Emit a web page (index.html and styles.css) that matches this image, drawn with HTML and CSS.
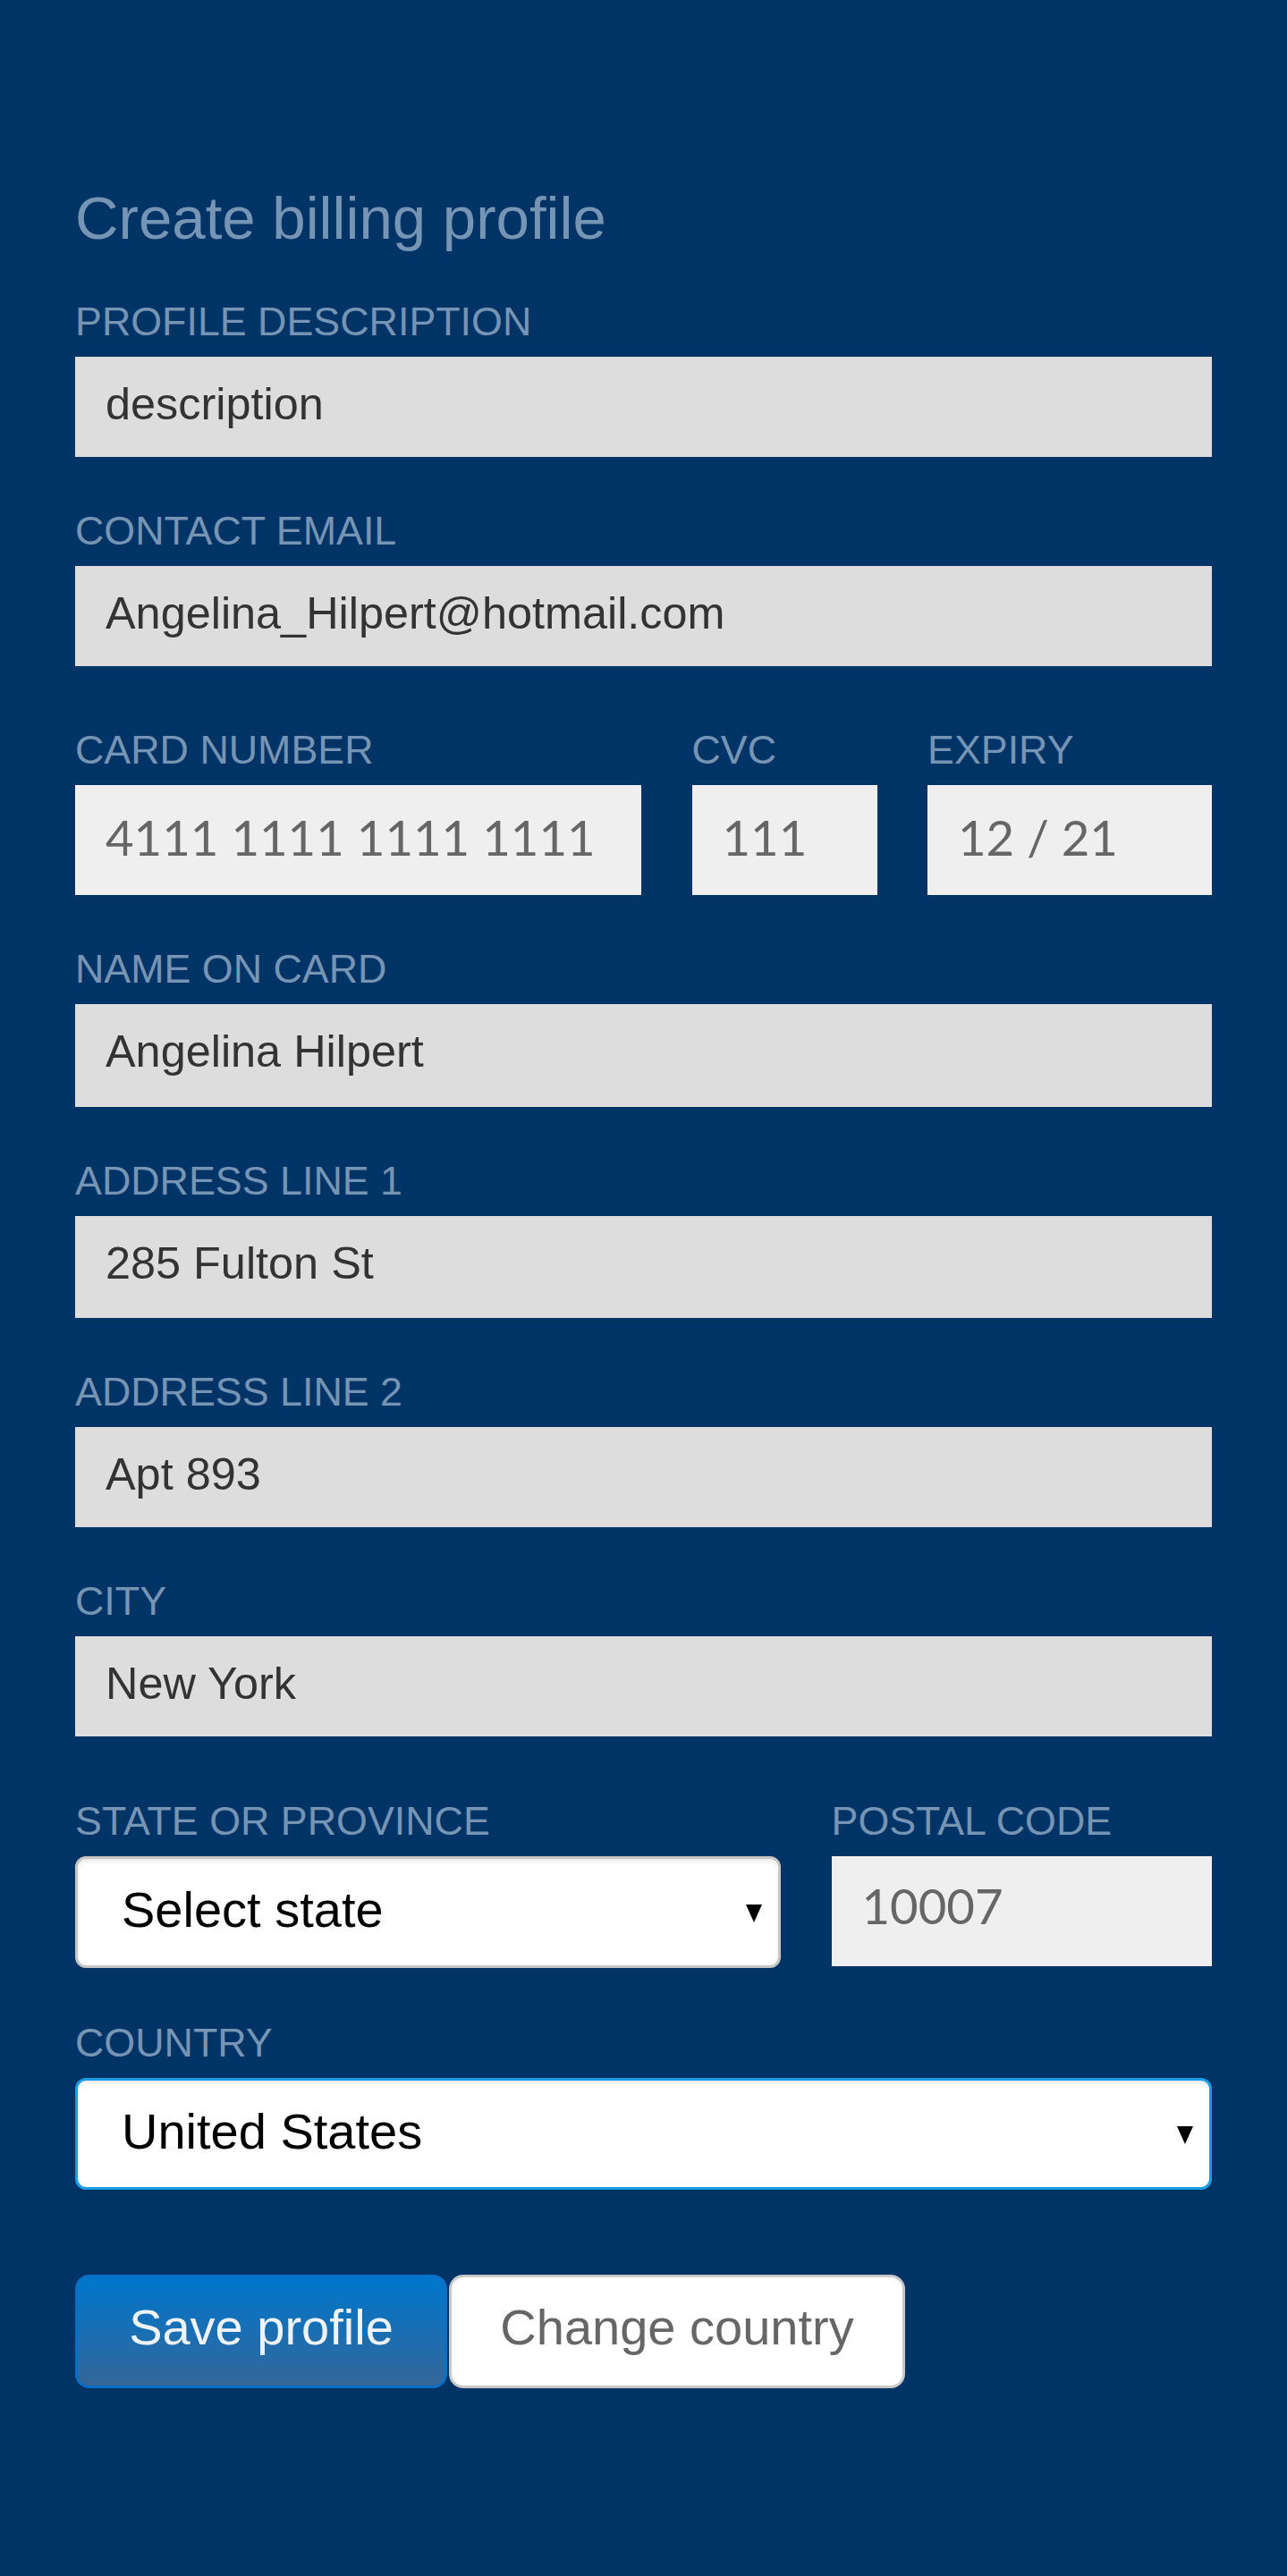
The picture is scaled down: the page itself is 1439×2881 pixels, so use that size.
FILE: index.html
```html
<!DOCTYPE html>
<html lang="en">
<head>
<meta charset="utf-8">
<title>Create billing profile</title>
<link rel="stylesheet" href="styles.css">
</head>
<body>
<main class="page">
  <h1 class="title">Create billing profile</h1>

  <div class="field">
    <span class="label">PROFILE DESCRIPTION</span>
    <div class="input">description</div>
  </div>

  <div class="field">
    <span class="label">CONTACT EMAIL</span>
    <div class="input">Angelina_Hilpert@hotmail.com</div>
  </div>

  <div class="row">
    <div class="col col-card">
      <span class="label">CARD NUMBER</span>
      <div class="stripe">4111 1111 1111 1111</div>
    </div>
    <div class="col col-cvc">
      <span class="label">CVC</span>
      <div class="stripe">111</div>
    </div>
    <div class="col col-fill">
      <span class="label">EXPIRY</span>
      <div class="stripe">12 / 21</div>
    </div>
  </div>

  <div class="field">
    <span class="label">NAME ON CARD</span>
    <div class="input input-tall">Angelina Hilpert</div>
  </div>

  <div class="field">
    <span class="label">ADDRESS LINE 1</span>
    <div class="input input-mid">285 Fulton St</div>
  </div>

  <div class="field">
    <span class="label">ADDRESS LINE 2</span>
    <div class="input">Apt 893</div>
  </div>

  <div class="field">
    <span class="label">CITY</span>
    <div class="input">New York</div>
  </div>

  <div class="row row-state">
    <div class="col col-state">
      <span class="label">STATE OR PROVINCE</span>
      <div class="select"><span class="select-text">Select state</span><span class="arrow"></span></div>
    </div>
    <div class="col col-fill">
      <span class="label">POSTAL CODE</span>
      <div class="stripe stripe-postal">10007</div>
    </div>
  </div>

  <div class="field">
    <span class="label">COUNTRY</span>
    <div class="select select-focus"><span class="select-text">United States</span><span class="arrow"></span></div>
  </div>

  <div class="actions">
    <button class="btn btn-primary" type="button">Save profile</button>
    <button class="btn btn-secondary" type="button">Change country</button>
  </div>
</main>
</body>
</html>
```

FILE: styles.css
```css
html, body {
  margin: 0;
  padding: 0;
  background: #003366;
}

body {
  font-family: "Liberation Sans", Arial, sans-serif;
}

.page {
  box-sizing: border-box;
  min-height: 2881px;
  padding: 205px 84px 200px;
}

.title {
  margin: 0 0 51px;
  font-size: 67.2px;
  line-height: 77px;
  font-weight: normal;
  color: #7694b4;
}

.field {
  margin-bottom: 56px;
}

.label {
  display: block;
  font-size: 44.8px;
  line-height: 52px;
  margin-bottom: 14px;
  color: #7694b4;
  white-space: nowrap;
}

.input {
  box-sizing: border-box;
  height: 112px;
  padding: 25px 34px 0;
  background: #dddddd;
  color: #333333;
  font-size: 50.4px;
  line-height: 56px;
  white-space: nowrap;
  overflow: hidden;
}

.input-tall {
  height: 115px;
}

.input-mid {
  height: 114px;
}

.row {
  display: flex;
  gap: 56.5px;
  margin-top: 67px;
  margin-bottom: 56px;
}

.row-state {
  margin-top: 68px;
  margin-bottom: 57px;
}

.col-card {
  flex: 0 0 633px;
}

.col-cvc {
  flex: 0 0 207px;
}

.col-state {
  flex: 0 0 789px;
}

.col-fill {
  flex: 1 1 auto;
  min-width: 0;
}

.stripe {
  box-sizing: border-box;
  height: 123px;
  padding: 25.5px 34px 0;
  background: #efefef;
  color: #666666;
  font-family: Lato, "Liberation Sans", Arial, sans-serif;
  font-size: 54.5px;
  line-height: 64px;
  white-space: nowrap;
  overflow: hidden;
}

.stripe-postal {
  padding-top: 23px;
}

.select {
  box-sizing: border-box;
  height: 125px;
  display: flex;
  align-items: flex-start;
  justify-content: space-between;
  padding: 25px 0 0 49px;
  background: #ffffff;
  border: 3px solid #c6c6c6;
  border-radius: 12px;
  box-shadow: inset 0 3px 4px rgba(0, 0, 0, 0.08);
  color: #000000;
  font-size: 56px;
  line-height: 64px;
}

.select-focus {
  border-color: #1b9de4;
}

.select-text {
  white-space: nowrap;
}

.arrow {
  align-self: center;
  width: 0;
  height: 0;
  margin-top: -22px;
  margin-right: 18px;
  border-left: 9px solid transparent;
  border-right: 9px solid transparent;
  border-top: 20px solid #000000;
}

.actions {
  display: flex;
  gap: 2px;
  margin-top: 95px;
}

.btn {
  box-sizing: border-box;
  height: 127px;
  margin: 0;
  padding: 0 0 10px;
  border: 3px solid;
  border-radius: 16px;
  font-family: "Liberation Sans", Arial, sans-serif;
  font-size: 56px;
  line-height: 64px;
  text-align: center;
  white-space: nowrap;
}

.btn-primary {
  width: 416px;
  background: linear-gradient(#0077cc, #336699);
  border-color: #0a70c6;
  color: #eef3f9;
}

.btn-secondary {
  width: 510px;
  background: #ffffff;
  border-color: #c8c8c8;
  color: #666666;
}
```
